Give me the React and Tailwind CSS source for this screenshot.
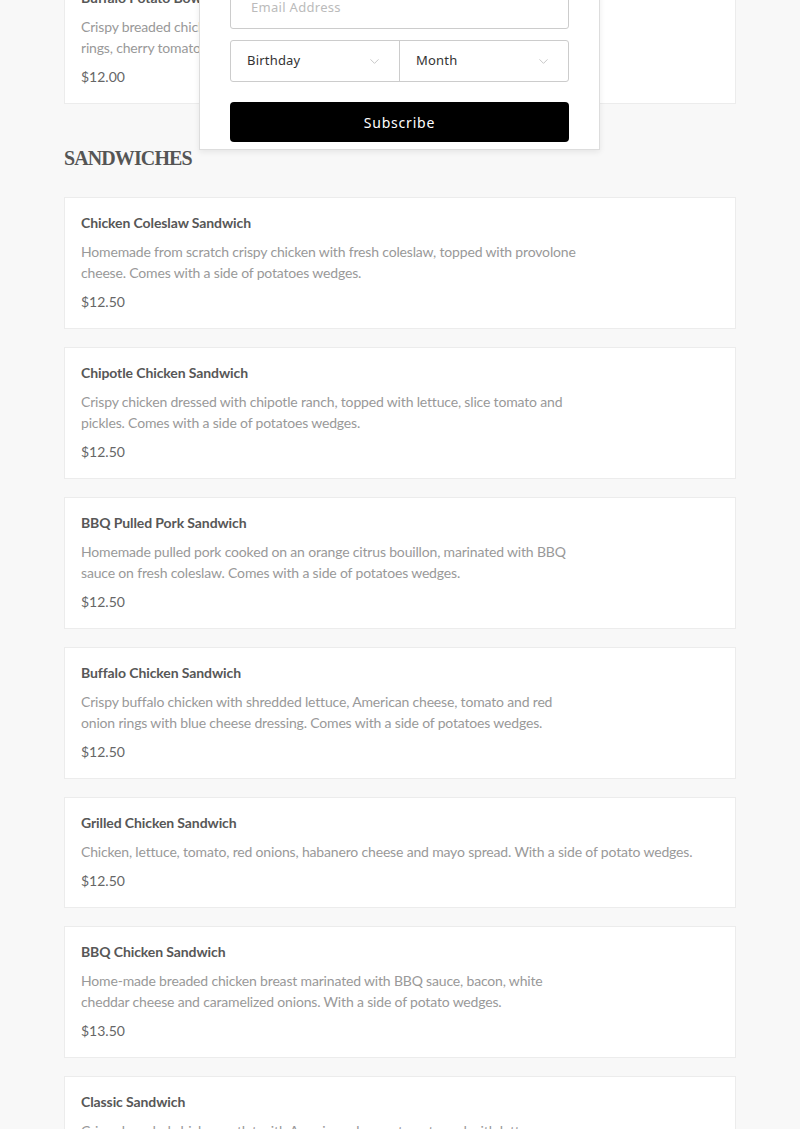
import React from 'react'
import { ChevronDown } from 'lucide-react'

const sandwiches = [
  {
    name: 'Chicken Coleslaw Sandwich',
    desc: 'Homemade from scratch crispy chicken with fresh coleslaw, topped with provolone cheese. Comes with a side of potatoes wedges.',
    price: '$12.50',
  },
  {
    name: 'Chipotle Chicken Sandwich',
    desc: 'Crispy chicken dressed with chipotle ranch, topped with lettuce, slice tomato and pickles. Comes with a side of potatoes wedges.',
    price: '$12.50',
  },
  {
    name: 'BBQ Pulled Pork Sandwich',
    desc: 'Homemade pulled pork cooked on an orange citrus bouillon, marinated with BBQ sauce on fresh coleslaw. Comes with a side of potatoes wedges.',
    price: '$12.50',
  },
  {
    name: 'Buffalo Chicken Sandwich',
    desc: 'Crispy buffalo chicken with shredded lettuce, American cheese, tomato and red onion rings with blue cheese dressing. Comes with a side of potatoes wedges.',
    price: '$12.50',
  },
  {
    name: 'Grilled Chicken Sandwich',
    desc: 'Chicken, lettuce, tomato, red onions, habanero cheese and mayo spread. With a side of potato wedges.',
    price: '$12.50',
    wide: true,
  },
  {
    name: 'BBQ Chicken Sandwich',
    desc: 'Home-made breaded chicken breast marinated with BBQ sauce, bacon, white cheddar cheese and caramelized onions. With a side of potato wedges.',
    price: '$13.50',
  },
  {
    name: 'Classic Sandwich',
    desc: 'Crispy breaded chicken cutlet with American cheese, tomato and with lettuce, pickles and mayo. With a side of potato wedges.',
    price: '$12.50',
  },
]

function MenuCard({ item }) {
  return (
    <div className="bg-white border border-[#ececec] px-[16px] pt-[15px] pb-[16px]">
      <div className="text-[14px] leading-[20px] font-bold text-[#575757] tracking-[-0.1px]">{item.name}</div>
      <p className={`mt-2 text-[14px] leading-[21px] text-[#999] tracking-[-0.17px] ${item.wide ? '' : 'max-w-[505px]'}`}>
        {item.desc}
      </p>
      <div className="mt-2 text-[14px] leading-[21px] text-[#666]">{item.price}</div>
    </div>
  )
}

function SelectBox({ label, className }) {
  return (
    <div className={`flex-1 h-full flex items-center justify-between pl-[16px] pr-[17px] ${className}`}>
      <span className="text-[13px] text-[#333] tracking-[0.2px]">{label}</span>
      <ChevronDown size={15} strokeWidth={1.5} className="text-[#c4c4c4]" />
    </div>
  )
}

export default function App() {
  return (
    <div
      className="min-h-[1129px] bg-[#f8f8f8] overflow-hidden"
      style={{ fontFamily: 'Lato, "Open Sans", sans-serif' }}
    >
      <div className="relative w-[672px] mx-auto mt-[-28px]">
        {/* previous section tail */}
        <MenuCard
          item={{
            name: 'Buffalo Potato Bowl',
            desc: (
              <>
                Crispy breaded chicken with potato wedges, buffalo sauce, cheese, red onion
                <br />
                rings, cherry tomatoes and ranch dressing.
              </>
            ),
            price: '$12.00',
          }}
        />

        <h2
          className="mt-[40px] mb-[25px] text-[20px] leading-[28px] font-bold text-[#555] tracking-[-0.9px]"
          style={{ fontFamily: '"Liberation Serif", "DejaVu Serif", serif' }}
        >
          SANDWICHES
        </h2>

        <div className="flex flex-col gap-[18px]">
          {sandwiches.map((item) => (
            <MenuCard key={item.name} item={item} />
          ))}
        </div>

        {/* newsletter popup */}
        <div
          className="absolute left-[135px] top-[-16px] w-[401px] bg-white border border-[#ddd] shadow-[0_2px_6px_rgba(0,0,0,0.08)] px-[30px] pt-[30px] pb-[7px]"
          style={{ fontFamily: '"Noto Sans", Inter, sans-serif' }}
        >
          <div className="h-[42px] border border-[#ccc] rounded-[3px] flex items-center pl-[20px]">
            <span className="text-[13px] text-[#bbb] tracking-[0.3px]">Email Address</span>
          </div>
          <div className="mt-[11px] h-[42px] border border-[#ccc] rounded-[3px] flex">
            <SelectBox label="Birthday" className="border-r border-[#ccc]" />
            <SelectBox label="Month" />
          </div>
          <button className="mt-[20px] w-full h-[40px] bg-black rounded-[4px] text-white text-[14px] tracking-[0.8px]">
            Subscribe
          </button>
        </div>
      </div>
    </div>
  )
}
